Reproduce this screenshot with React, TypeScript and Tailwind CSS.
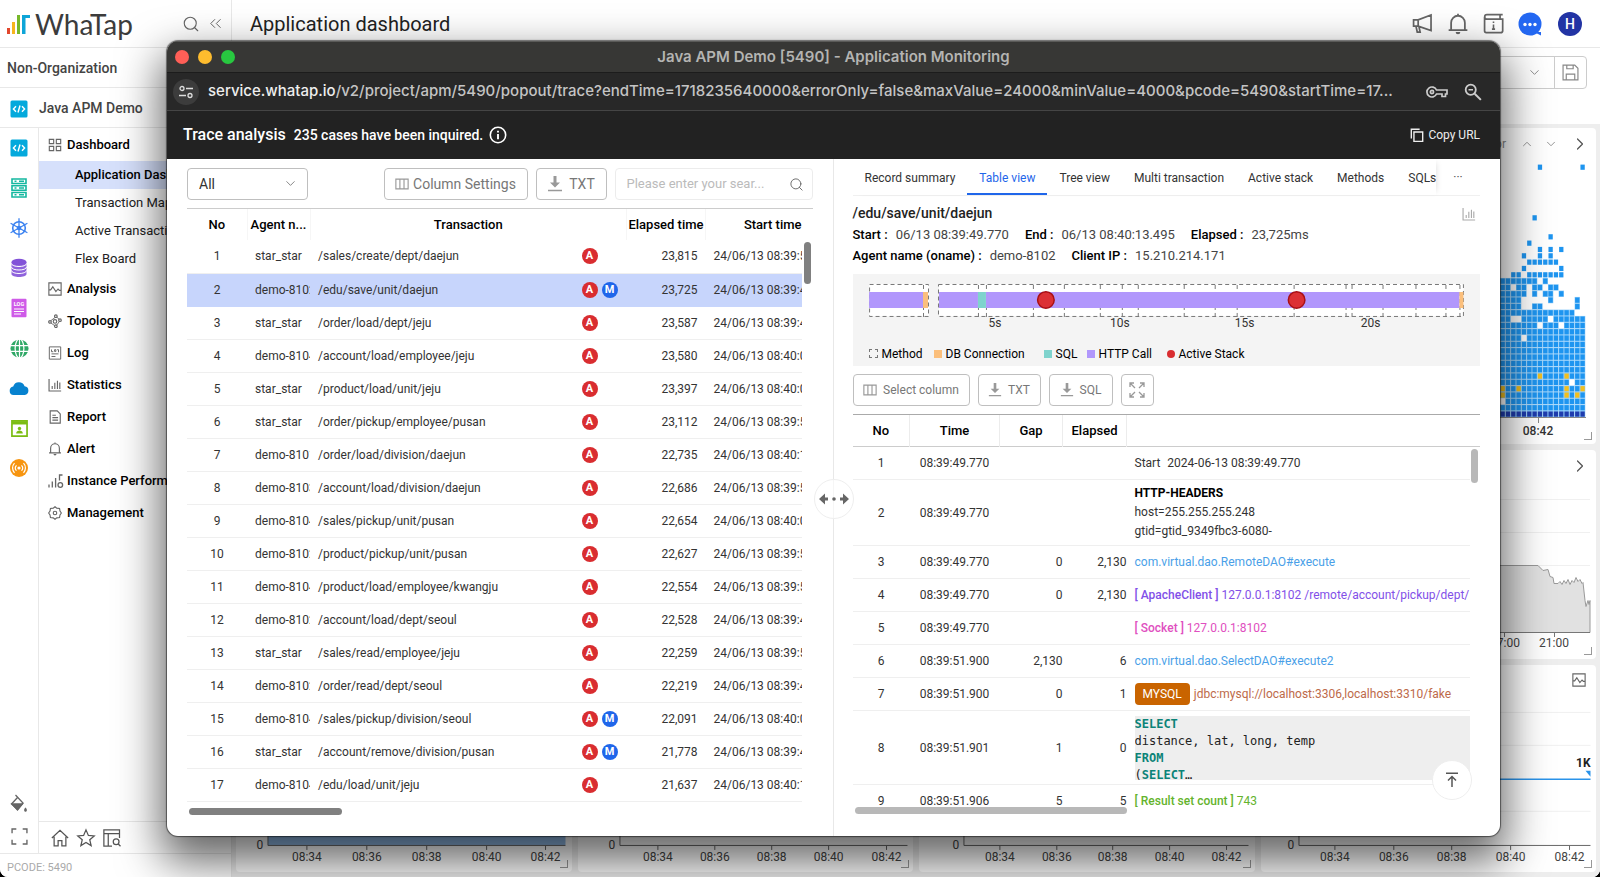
import type { ReactNode } from "react";
import clsx from "clsx";
import { ChevronDown, ChevronRight, ChevronUp, ChevronsLeft, Search } from "lucide-react";

type Trace = {
	agent: string;
	path: string;
	multi?: boolean;
	elapsed: string;
	start: string;
};

const traces: Trace[] = [
	{ agent: "star_star", path: "/sales/create/dept/daejun", elapsed: "23,815", start: "24/06/13 08:39:5" },
	{ agent: "demo-8102", path: "/edu/save/unit/daejun", multi: true, elapsed: "23,725", start: "24/06/13 08:39:4" },
	{ agent: "star_star", path: "/order/load/dept/jeju", elapsed: "23,587", start: "24/06/13 08:39:4" },
	{ agent: "demo-8104", path: "/account/load/employee/jeju", elapsed: "23,580", start: "24/06/13 08:40:0" },
	{ agent: "star_star", path: "/product/load/unit/jeju", elapsed: "23,397", start: "24/06/13 08:40:0" },
	{ agent: "star_star", path: "/order/pickup/employee/pusan", elapsed: "23,112", start: "24/06/13 08:39:5" },
	{ agent: "demo-8101", path: "/order/load/division/daejun", elapsed: "22,735", start: "24/06/13 08:40:1" },
	{ agent: "demo-8103", path: "/account/load/division/daejun", elapsed: "22,686", start: "24/06/13 08:39:5" },
	{ agent: "demo-8104", path: "/sales/pickup/unit/pusan", elapsed: "22,654", start: "24/06/13 08:40:0" },
	{ agent: "demo-8102", path: "/product/pickup/unit/pusan", elapsed: "22,627", start: "24/06/13 08:39:5" },
	{ agent: "demo-8104", path: "/product/load/employee/kwangju", elapsed: "22,554", start: "24/06/13 08:39:5" },
	{ agent: "demo-8102", path: "/account/load/dept/seoul", elapsed: "22,528", start: "24/06/13 08:39:4" },
	{ agent: "star_star", path: "/sales/read/employee/jeju", elapsed: "22,259", start: "24/06/13 08:39:5" },
	{ agent: "demo-8102", path: "/order/read/dept/seoul", elapsed: "22,219", start: "24/06/13 08:39:4" },
	{ agent: "demo-8104", path: "/sales/pickup/division/seoul", multi: true, elapsed: "22,091", start: "24/06/13 08:40:0" },
	{ agent: "star_star", path: "/account/remove/division/pusan", multi: true, elapsed: "21,778", start: "24/06/13 08:39:4" },
	{ agent: "demo-8104", path: "/edu/load/unit/jeju", elapsed: "21,637", start: "24/06/13 08:40:1" },
];

type Step = { time: string; gap?: string; elapsed?: string; height?: string; content: ReactNode };

const steps: Step[] = [
	{
		time: "08:39:49.770",
		content: (
			<>
				Start <span className="ml-1">2024-06-13 08:39:49.770</span>
			</>
		),
	},
	{
		time: "08:39:49.770",
		height: "h-[66px]",
		content: (
			<div className="leading-[19px]">
				<p className="font-bold text-black">HTTP-HEADERS</p>
				<p>host=255.255.255.248</p>
				<p>gtid=gtid_9349fbc3-6080-</p>
			</div>
		),
	},
	{
		time: "08:39:49.770",
		gap: "0",
		elapsed: "2,130",
		content: <span className="text-[#4a9fe8]">com.virtual.dao.RemoteDAO#execute</span>,
	},
	{
		time: "08:39:49.770",
		gap: "0",
		elapsed: "2,130",
		content: (
			<span className="text-[#8250e8]">
				<b className="font-medium">[ ApacheClient ]</b> 127.0.0.1:8102 /remote/account/pickup/dept/
			</span>
		),
	},
	{
		time: "08:39:49.770",
		content: (
			<span className="text-[#e04fc0]">
				<b className="font-medium">[ Socket ]</b> 127.0.0.1:8102
			</span>
		),
	},
	{
		time: "08:39:51.900",
		gap: "2,130",
		elapsed: "6",
		content: <span className="text-[#4a9fe8]">com.virtual.dao.SelectDAO#execute2</span>,
	},
	{
		time: "08:39:51.900",
		gap: "0",
		elapsed: "1",
		content: (
			<div className="flex items-center gap-1">
				<span className="rounded bg-[#c96400] px-2 leading-[22px] text-white">MYSQL</span>
				<span className="text-[#bd6a4a]">jdbc:mysql://localhost:3306,localhost:3310/fake</span>
			</div>
		),
	},
	{
		time: "08:39:51.901",
		gap: "1",
		elapsed: "0",
		height: "h-[74px]",
		content: (
			<pre className="h-16 overflow-hidden bg-[#eeeeee] font-[family-name:DejaVu_Sans_Mono,monospace] text-[12px] leading-[17px] text-[#222]">
				<b className="text-[#0b8378]">SELECT</b>
				{"\ndistance, lat, long, temp\n"}
				<b className="text-[#0b8378]">FROM</b>
				{"\n("}
				<b className="text-[#0b8378]">SELECT</b>…
			</pre>
		),
	},
	{
		time: "08:39:51.906",
		gap: "5",
		elapsed: "5",
		content: (
			<span className="text-[#64b32c]">
				<b className="font-medium">[ Result set count ]</b> 743
			</span>
		),
	},
];

/* ---------- icons ---------- */

type IconProps = { className?: string; children: ReactNode; size?: number };

function Line({ className, children, size = 14 }: IconProps) {
	return (
		<svg
			viewBox="0 0 16 16"
			width={size}
			height={size}
			className={clsx("shrink-0", className)}
			fill="none"
			stroke="currentColor"
			strokeWidth="1.3"
		>
			{children}
		</svg>
	);
}

function CodeIcon() {
	return (
		<svg viewBox="0 0 18 18" width="18" height="18" className="shrink-0">
			<rect x="0.5" y="0.5" width="17" height="17" rx="1.5" fill="#04a9dc" />
			<path d="M6 6.2 3.4 9 6 11.8M12 6.2 14.6 9 12 11.8M10 5.5 8 12.5" fill="none" stroke="#fff" strokeWidth="1.4" />
		</svg>
	);
}

function ColumnsIcon() {
	return (
		<Line>
			<path d="M1 2.5h14v11H1zM5.6 2.5v11M10.3 2.5v11" />
		</Line>
	);
}

function DownloadIcon({ size = 14 }: { size?: number }) {
	return (
		<svg viewBox="0 0 16 16" width={size} height={size} className="shrink-0" fill="currentColor">
			<path d="M6.5 0h3v6.5H13L8 11.5 3 6.5h3.5zM1 13.8h14v1.4H1z" />
		</svg>
	);
}

function BarsIcon({ size = 14, className }: { size?: number; className?: string }) {
	return (
		<Line size={size} className={className}>
			<path d="M1.2 1v13.8H15M4.8 12.5V9M7.8 12.5V5.5M10.8 12.5V3M13.5 12.5V5" />
		</Line>
	);
}

function Bell({ size = 14, className }: { size?: number; className?: string }) {
	return (
		<Line size={size} className={className}>
			<path d="M1.2 12.5h13.6M3 12.5V7a5 5 0 0 1 10 0v5.5M8 2V.6" />
			<path d="M6.3 13.8h3.4a1.7 1.7 0 0 1-3.4 0z" fill="currentColor" stroke="none" />
		</Line>
	);
}

const products: { name: string; icon: ReactNode }[] = [
	{ name: "Application", icon: <CodeIcon /> },
	{
		name: "Server",
		icon: (
			<svg viewBox="0 0 18 20" width="18" height="20" fill="none" stroke="#14b8a0" strokeWidth="1.6">
				<path d="M2 1h14v4.5H2zM2 7.8h14v4.5H2zM2 14.5h14V19H2z" />
				<path d="M4.5 3.2h2M9 3.2h5M4.5 10h2M9 10h5M4.5 16.8h2M9 16.8h5" strokeWidth="1.4" />
			</svg>
		),
	},
	{
		name: "Kubernetes",
		icon: (
			<svg viewBox="0 0 20 20" width="20" height="20" fill="none" stroke="#3b82f0" strokeWidth="1.6">
				<circle cx="10" cy="10" r="6.3" />
				<circle cx="10" cy="10" r="1.5" />
				<path d="M10 .3v19.4M1.6 5.2l16.8 9.6M1.6 14.8l16.8-9.6" strokeWidth="1.3" />
			</svg>
		),
	},
	{
		name: "Database",
		icon: (
			<svg viewBox="0 0 18 20" width="18" height="20">
				<path d="M1.5 4v12c0 4 15 4 15 0V4z" fill="#8f63dc" />
				<ellipse cx="9" cy="4" rx="7.5" ry="3.2" fill="#8252d8" />
				<path d="M1.5 5.5c0 4 15 4 15 0M1.5 9c0 4 15 4 15 0M1.5 12.5c0 4 15 4 15 0" fill="none" stroke="#fff" strokeWidth="1" />
			</svg>
		),
	},
	{
		name: "Log",
		icon: (
			<svg viewBox="0 0 16 20" width="16" height="20">
				<rect x="0.5" y="0.8" width="15" height="18.4" rx="1" fill="#cf5be8" />
				<text x="8" y="8.2" fontSize="5.5" fontWeight="700" fill="#fff" textAnchor="middle">LOG</text>
				<path d="M3 11h10M3 13.5h10M3 16h7" stroke="#fff" strokeWidth="1" />
			</svg>
		),
	},
	{
		name: "Browser",
		icon: (
			<svg viewBox="0 0 20 20" width="19" height="19">
				<circle cx="10" cy="10" r="9.5" fill="#2fa866" />
				<path d="M10 0v20M0 7h20M0 13h20" stroke="#fff" strokeWidth="1.3" />
				<ellipse cx="10" cy="10" rx="4.6" ry="10" fill="none" stroke="#fff" strokeWidth="1.3" />
			</svg>
		),
	},
	{
		name: "Cloud",
		icon: (
			<svg viewBox="0 0 20 14" width="20" height="14">
				<path d="M4.5 14a4.3 4.3 0 0 1-.3-8.5A6 6 0 0 1 15.6 5.3 4.4 4.4 0 0 1 15.7 14z" fill="#0782cf" />
			</svg>
		),
	},
	{
		name: "RUM",
		icon: (
			<svg viewBox="0 0 18 18" width="17" height="17" fill="none" stroke="#7bbd12" strokeWidth="1.8">
				<path d="M1 1h16v16H1z" />
				<path d="M1 3h16" strokeWidth="3.5" />
				<circle cx="9" cy="9" r="1.8" fill="#7bbd12" stroke="none" />
				<path d="M5.5 14.2c0-4 7-4 7 0z" fill="#7bbd12" stroke="none" />
			</svg>
		),
	},
	{
		name: "URL",
		icon: (
			<svg viewBox="0 0 18 18" width="18" height="18" fill="none" stroke="#fff" strokeWidth="1.2">
				<circle cx="9" cy="9" r="9" fill="#f79510" stroke="none" />
				<circle cx="9" cy="9" r="1.6" fill="#fff" stroke="none" />
				<path d="M6.5 6.3a4 4 0 0 0 0 5.4M11.5 6.3a4 4 0 0 1 0 5.4M4.5 4.2a7 7 0 0 0 0 9.6M13.5 4.2a7 7 0 0 1 0 9.6" />
			</svg>
		),
	},
];

const menu: { name: string; icon: ReactNode; children?: string[] }[] = [
	{
		name: "Dashboard",
		icon: <Line><path d="M1.5 1.5h5v5h-5zM9.5 1.5h5v5h-5zM1.5 9.5h5v5h-5zM9.5 9.5h5v5h-5z" /></Line>,
		children: ["Application Dashboard", "Transaction Map", "Active Transaction", "Flex Board"],
	},
	{
		name: "Analysis",
		icon: <Line><path d="M1 1h14v14H1zM1 9h2l2.5-3.5L9 11l2.5-3 1.5 1.5h2" /></Line>,
	},
	{
		name: "Topology",
		icon: (
			<Line>
				<circle cx="8" cy="8.5" r="2" />
				<circle cx="9" cy="2.5" r="1.5" />
				<circle cx="2.3" cy="9" r="1.5" />
				<circle cx="13.7" cy="7" r="1.5" />
				<circle cx="9" cy="14" r="1.5" />
				<path d="m10 3.6 2.7 2.4M3.3 10.2l4.4 3.2M8 4 3 7.8M13 8.5l-3 4.2" strokeWidth="1" />
			</Line>
		),
	},
	{
		name: "Log",
		icon: <Line><path d="M1.5 1h13v14h-13zM4 4v2.5h2M7.5 4.2H9v2H7.5zM10.5 4.2H12v3M4 9h8M4 12h4.5" strokeWidth="1.1" /></Line>,
	},
	{ name: "Statistics", icon: <BarsIcon /> },
	{
		name: "Report",
		icon: <Line><path d="M2.5 1h8L14 4.5V15H2.5zM5 6h4M5 8.7h6.5M5 11.5h6.5" /></Line>,
	},
	{ name: "Alert", icon: <Bell /> },
	{
		name: "Instance Performance",
		icon: <Line size={16} className="-mr-0.5"><path d="M1 14.5v-3M4.3 14.5v-6M7.6 14.5V5M14.5 2h-3v5.5" /><circle cx="12.3" cy="12" r="2.3" /></Line>,
	},
	{
		name: "Management",
		icon: <Line><path d="M8 .8 10 2.5l3.2.3.5 3L15.3 8l-1.6 2.3-.5 2.9-3.2.4L8 15.2l-2-1.6-3.200-.4-.5-2.900L.7 8l1.600-2.200.5-3L6 2.500z" /><circle cx="8" cy="8" r="2" /></Line>,
	},
];

/* ---------- dashboard behind the popup ---------- */

// b = blue, y = yellow, n = navy, one character per 5 second bucket
const heatRows = [
	".......b.......b", "................", "................", "................",
	"................", "................", "................", "................",
	"......b.........", "................", "................", ".........b......",
	".....b..........", ".......b.b.b....", "....b..b.b......", ".....bbbbbb.....",
	"....b......b....", "..bb.bbbbbbb....", "bbbbbbb.b.......", "bb.bb.bb.bb.....",
	"bbbbb.b.bb.b....", "bbbb.....b....b.", "bbbb..bb......b.", "bbbbbbbbbbbbbb..",
	"bb..bbbbb.bbbbbb", "bbbbbbb.bbb.bbbb", "bbbbbbbbbbbbbbbb", "bbbb.bbbbbbbbbbb",
	"bbbbbbbbbbbbbbbb", "bbbbbbbbbbbbbbbb", "bbbbbbbbbbbbbbbb", "bbbbbbbbbbbbbbbb",
	"bbbbbbbbbbbbbbbb", "bbbbbbbybbbbybbb", "bbbbbbbbbbbbb.bb", "ybbybbbbbbbbybby",
	"ybbbbbbbbbbbybyb", ".bbbbbbbbbbbbbbb", "bbbbbbbbbbbbbbbb", "nnnnnnnnnnnnnnnn",
];

const heatFill: Record<string, string> = { b: "#1e95f0", y: "#f3bf1e", n: "#1f3cae" };

function HeatMap() {
	return (
		<svg viewBox="0 0 96 276" width="96" height="276">
			{heatRows.map((row, y) =>
				row.split("").map((cell, x) =>
					cell === "." ? null : (
						<g key={`${x}-${y}`}>
							{y > 17 && <rect x={x * 5.33} y={y * 6.33} width="5.33" height="6.33" fill="#90cdfa" />}
							<rect x={x * 5.33 + 0.5} y={y * 6.33 + 0.6} width="4.3" height="5.2" fill={heatFill[cell]} />
						</g>
					),
				),
			)}
			<path d="M0 253.5h86M38.5 254v5" stroke="#888" fill="none" />
			<text x="38" y="271" fontSize="12" fontWeight="500" textAnchor="middle" fill="#333">08:42</text>
		</svg>
	);
}

function CornerMark() {
	return <span className="absolute right-1 bottom-1 size-2 border-r border-b border-[#999]" />;
}

function Card({ className, children }: { className?: string; children?: ReactNode }) {
	return <section className={clsx("relative min-h-0 min-w-0 overflow-hidden rounded bg-white", className)}>{children}</section>;
}

function TimeChart({ axis, labels, end, filled }: { axis: number; labels: number[]; end: number; filled?: boolean }) {
	const times = ["08:34", "08:36", "08:38", "08:40", "08:42"];

	return (
		<svg viewBox="0 0 336 60" className="absolute bottom-0 left-0 w-full" fill="none" stroke="#666">
			{filled && <rect x={axis} y="0" width={end - axis} height="33" fill="#8fb9e6" stroke="none" />}
			<path d={`M${axis} 0V33.5H${end}`} />
			<text x={axis - 8} y="37" fontSize="12" textAnchor="middle" fill="#444" stroke="none">0</text>
			{labels.map((x, i) => (
				<g key={x}>
					<path d={`M${x} 34v4`} />
					<text x={x} y="49" fontSize="12" textAnchor="middle" fill="#444" stroke="none">{times[i]}</text>
				</g>
			))}
		</svg>
	);
}

function Sidebar() {
	return (
		<aside className="flex w-[232px] shrink-0 flex-col border-r border-[#e8e8e8] bg-white">
			<div className="flex h-12 items-center border-b border-[#e8e8e8] pr-1.5 pl-1.5">
				<svg viewBox="0 0 26 22" width="26" height="22" className="shrink-0">
					<path d="M1 15h3v6H1z" fill="#e2472d" />
					<path d="M6 9h3v12H6z" fill="#f6b51e" />
					<path d="M11 2h3v19h-3z" fill="#77b82a" />
					<path d="M16 2h8v3h-4.5v16H16z" fill="#0ea5d8" />
				</svg>
				<span className="pl-[3px] font-[family-name:Lato,sans-serif] text-[28px] leading-8 text-[#3c3c3c]">WhaTap</span>
				<div className="ml-auto flex items-center gap-1.5 text-[#666]">
					<button aria-label="Search menu"><Search size={18} strokeWidth={1.5} /></button>
					<button aria-label="Collapse menu"><ChevronsLeft size={19} strokeWidth={1.25} /></button>
				</div>
			</div>
			<div className="flex h-10 items-center border-b border-[#e8e8e8] pt-0.5 pl-[7px] text-[14px] font-medium text-[#444]">Non-Organization</div>
			<div className="flex h-10 items-center gap-[11px] border-b border-[#e8e8e8] pt-0.5 pl-2.5 text-[14px] font-medium text-[#444]">
				<CodeIcon />
				Java APM Demo
			</div>

			<div className="flex min-h-0 flex-1">
				<div className="flex w-[39px] flex-col items-center border-r border-[#e8e8e8]">
					{products.map((p) => (
						<a key={p.name} href="#" aria-label={p.name} className="flex h-10 items-center">
							{p.icon}
						</a>
					))}
					<div className="mt-auto flex flex-col items-center gap-3.5 pb-2 text-[#666]">
						<button aria-label="Theme">
							<svg viewBox="0 0 18 20" width="18" height="20" fill="none" stroke="currentColor" strokeWidth="1.3">
								<path d="m5.5 1 7.5 8-5.5 6.5L1.5 10l6-6.5" />
								<path d="M2 10h10.5l-5 6z" fill="currentColor" />
								<path d="M15.5 14.5c2.5 3.5-2.5 3.5 0 0z" fill="currentColor" />
							</svg>
						</button>
						<button aria-label="Full screen">
							<Line size={17}><path d="M1 5V1h4M11 1h4v4M15 11v4h-4M5 15H1v-4" /></Line>
						</button>
					</div>
				</div>
				<div className="flex min-w-0 flex-1 flex-col">
					<nav className="flex-1 pt-px text-[13px] text-[#222]">
						{menu.map((item) => (
							<div key={item.name}>
								<a href="#" className="flex h-8 items-center gap-[5px] pl-[9px] font-medium whitespace-nowrap text-black">
									<span className="text-[#666]">{item.icon}</span>
									{item.name}
								</a>
								{item.children?.map((child, i) => (
									<a
										key={child}
										href="#"
										className={clsx(
											"block h-7 truncate pl-9 leading-7",
											i === 0 && "bg-[#d6e0fb] font-medium text-black",
										)}
									>
										{child}
									</a>
								))}
							</div>
						))}
					</nav>
					<div className="flex h-8 items-center gap-1.5 border-t border-[#e8e8e8] pl-[11px] text-[#555]">
						<button aria-label="Home">
							<Line size={20}><path d="M1.5 8 8 1.8 14.5 8M3.3 7v7.3h3.2V10h3v4.3h3.2V7" strokeWidth="1" /></Line>
						</button>
						<button aria-label="Favorites">
							<Line size={20}><path d="m8 1.5 1.9 4.4 4.7.4L11 9.400l1.100 4.700L8 11.600l-4.100 2.500L5 9.400 1.400 6.300l4.700-.4z" strokeWidth="1" /></Line>
						</button>
						<button aria-label="Search layout">
							<Line size={20}><path d="M14 8V1.5H1.5v13H8M1.5 4.5H14M5 4.5v10M13 12.8l1.8 1.8" strokeWidth="1" /><circle cx="11.3" cy="11" r="2.3" strokeWidth="1" /></Line>
						</button>
					</div>
				</div>
			</div>
			<div className="flex h-6 items-center border-t border-[#e8e8e8] pt-1.5 pl-[7px] text-[11px] text-[#aaa]">PCODE: 5490</div>
		</aside>
	);
}

function Dashboard() {
	return (
		<main className="flex min-w-0 flex-1 flex-col bg-white">
			<header className="flex h-12 shrink-0 items-center border-b border-[#e8e8e8] pr-[18px] pl-[18px]">
				<h1 className="text-[20px] text-[#222]">Application dashboard</h1>
				<div className="ml-auto flex items-center gap-3.5 text-[#666]">
					<button aria-label="Notices">
						<Line size={21}><path d="M1.2 5.2h3.5l9.800-3.700v11.800L4.700 10H1.200zM4.700 5.200V10M3 10l1 4.500h2.200L5.300 10.300" /></Line>
					</button>
					<button aria-label="Alerts"><Bell size={22} /></button>
					<button aria-label="Guide">
						<Line size={21}>
							<path d="M15 1.3H3a1.700 1.700 0 0 0 0 3.400h12v8.800q0 1.500-1.500 1.500h-11Q1.200 15 1.200 13.500V3M13 1.300v3.200" />
							<path d="M8 8.7v3.8M8 6.5v1.2M6.8 12.300h2.400" strokeWidth="1.2" />
						</Line>
					</button>
					<button aria-label="Chat">
						<svg viewBox="0 0 24 24" width="24" height="24">
							<circle cx="12" cy="12" r="11.5" fill="#2468f2" />
							<path d="M16 20h7v3.5z" fill="#2468f2" />
							<circle cx="7" cy="12.5" r="1.7" fill="#fff" />
							<circle cx="12" cy="12.5" r="1.7" fill="#fff" />
							<circle cx="17" cy="12.5" r="1.7" fill="#fff" />
						</svg>
					</button>
					<button className="ml-0.5 size-6 rounded-full bg-[#2234a4] text-[14px] leading-6 font-medium text-white">H</button>
				</div>
			</header>
			<div className="flex h-[76px] shrink-0 justify-end pt-2 pr-[13px]">
				<div className="flex h-[33px] w-[180px] items-center justify-end rounded border border-[#ccc] text-[#888]">
					<button aria-label="Choose preset" className="px-3"><ChevronDown size={15} strokeWidth={1.5} /></button>
					<button aria-label="Save preset" className="flex h-full items-center border-l border-[#ccc] px-[7px]">
						<Line size={17}><path d="M1 1h11l3 3v11H1zM4.5 1v3.5h6V1M4 15V9.5h8V15" strokeWidth="1.1" /></Line>
					</button>
				</div>
			</div>

			<div className="flex min-h-0 flex-1 flex-col gap-1.5 bg-[#eeeeee] px-1 pt-1 pb-[5px]">
				<Card className="flex basis-0 grow-[316] flex-col items-end">
					<div className="flex h-9 items-center gap-2 pr-1.5 pb-1 text-[12px] text-[#888]">
						<span>Error</span>
						<ChevronUp size={14} strokeWidth={1.5} className="ml-1.5" />
						<ChevronDown size={14} strokeWidth={1.5} className="ml-0.5" />
						<ChevronRight size={20} strokeWidth={1.5} className="ml-1 text-[#555]" />
					</div>
					<HeatMap />
					<CornerMark />
				</Card>
				<Card className="flex basis-0 grow-[210] flex-col items-end">
					<button aria-label="Open widget" className="mt-1.5 mr-1.5 text-[#555]"><ChevronRight size={20} strokeWidth={1.5} /></button>
					<svg viewBox="0 0 120 180" width="120" height="180" className="shrink-0">
						<path d="M0 23.5h114M0 56.5h114M0 89.5h114" stroke="#f0f0f0" />
						<path
							d="M0 89.5h62l5 5 5-1 2 7 3 1 1 6 4 0 2-2 2 3 2-4 2 3 2-4 2 5 2-4 2 2 2-5 2 4 2-2 2 4 1-1 2 18 1 6 2-6 1 4 1-4 0 32H0z"
							fill="#e1e1e1"
							stroke="#999"
						/>
						<path d="M0 156.5h114M28.5 157v4M78.5 157v4" stroke="#777" />
						<text x="29" y="171" fontSize="12" textAnchor="middle" fill="#444">17:00</text>
						<text x="78" y="171" fontSize="12" textAnchor="middle" fill="#444">21:00</text>
					</svg>
					<CornerMark />
				</Card>
				<div className="grid min-h-0 basis-0 grow-[207] grid-cols-4 gap-1.5">
					<Card>
						<TimeChart axis={32} labels={[71, 131, 191, 251, 310]} end={330} filled />
						<CornerMark />
					</Card>
					<Card>
						<TimeChart axis={42} labels={[80, 137, 194, 251, 309]} end={330} />
						<CornerMark />
					</Card>
					<Card>
						<TimeChart axis={45} labels={[81, 138, 194, 251, 308]} end={330} />
						<CornerMark />
					</Card>
					<Card>
						<button aria-label="Analysis" className="absolute top-2 right-2.5 text-[#666]">
							<Line size={14}><path d="M1 1h14v14H1zM1 9h2l2.5-3.5L9 11l2.5-3 1.5 1.5h2" /></Line>
						</button>
						<svg viewBox="0 0 336 147" className="absolute bottom-[60px] left-0 w-full" fill="none">
							<path d="M38 47.5h292M38 80.5h292" stroke="#f0f0f0" />
							<path d="M38 114.5h292" stroke="#2a93ea" strokeWidth="1.5" />
							<path d="M325 106h5v6z" fill="#2a93ea" />
							<text x="330" y="102" fontSize="12" fontWeight="700" textAnchor="end" fill="#222">1K</text>
							<path d="M38 146.5h292" stroke="#f0f0f0" />
						</svg>
						<TimeChart axis={38} labels={[74, 133, 191, 250, 309]} end={330} />
						<CornerMark />
					</Card>
				</div>
			</div>
		</main>
	);
}

/* ---------- popup ---------- */

function OutlineButton({ label, icon, className }: { label?: string; icon: ReactNode; className?: string }) {
	return (
		<button
			aria-label={label ?? "Expand all"}
			className={clsx(
				"flex h-8 shrink-0 items-center justify-center rounded border border-[#bfbfbf] whitespace-nowrap text-[#777]",
				className,
			)}
		>
			<span className="text-[#999]">{icon}</span>
			{label}
		</button>
	);
}

function TraceList() {
	return (
		<section className="flex min-w-0 flex-col border-r border-[#e8e8e8] px-5 pt-[9px]">
			<div className="flex items-center gap-2">
				<div className="relative mr-auto">
					<select aria-label="Filter" className="h-8 w-[121px] appearance-none rounded border border-[#bfbfbf] bg-white pl-[11px] text-[14px] text-[#333]">
						<option>All</option>
					</select>
					<ChevronDown size={15} strokeWidth={1.25} className="pointer-events-none absolute top-2 right-2.5 text-[#666]" />
				</div>
				<OutlineButton label="Column Settings" icon={<ColumnsIcon />} className="w-36 gap-1 text-[14px]" />
				<OutlineButton label="TXT" icon={<DownloadIcon size={16} />} className="w-[71px] gap-1.5 text-[14px]" />
				<label className="flex h-8 w-[198px] items-center rounded border border-[#ececec] pr-2 pl-[11px]">
					<input
						aria-label="Search"
						placeholder="Please enter your sear..."
						className="w-full min-w-0 text-[13px] outline-none placeholder:text-[#bbb]"
					/>
					<Search size={15} strokeWidth={1.5} className="shrink-0 text-[#666]" />
				</label>
			</div>

			<div className="relative mt-2 border-t border-[#ccc] pr-[11px]">
				<table className="w-full table-fixed border-collapse text-[12px] whitespace-nowrap text-[#333]">
					<colgroup>
						<col className="w-[60px]" />
						<col className="w-[63px]" />
						<col />
						<col className="w-[79px]" />
						<col className="w-24" />
					</colgroup>
					<thead>
						<tr className="h-[31px] text-[13px] text-black [&>th]:font-medium">
							<th>No</th>
							<th className="border-x border-[#f6f6f6]">Agent n...</th>
							<th>Transaction</th>
							<th className="border-x border-[#f6f6f6]">Elapsed time</th>
							<th className="text-right">Start time</th>
						</tr>
					</thead>
					<tbody>
						{traces.map((t, i) => (
							<tr key={i} className={clsx("h-[33px] border-b", i === 1 ? "border-[#c7d5fc] bg-[#c7d5fc]" : "border-[#efefef]")}>
								<td className="text-center">{i + 1}</td>
								<td className="overflow-hidden pl-2">{t.agent}</td>
								<td className="pr-[9px] pl-2">
									<div className="flex items-center">
										<span className="flex-1">{t.path}</span>
										<span className="flex w-9 gap-1 text-center text-[11px] leading-4 font-bold text-white">
											<span className="size-4 rounded-full bg-[#d92d30]">A</span>
											{t.multi && <span className="size-4 rounded-full bg-[#1f66ea]">M</span>}
										</span>
									</div>
								</td>
								<td className="pr-2 text-right">{t.elapsed}</td>
								<td className="overflow-hidden pl-2">{t.start}</td>
							</tr>
						))}
					</tbody>
				</table>
				<span className="absolute top-[33px] right-0.5 h-[42px] w-[7px] rounded-sm bg-[#808080]" />
			</div>
			<div className="mt-1.5 ml-0.5 h-[7px] w-[153px] rounded-sm bg-[#808080]" />
		</section>
	);
}

const tabs = ["Record summary", "Table view", "Tree view", "Multi transaction", "Active stack", "Methods", "SQLs"];
const methodLines = [54, 109, 117, 164, 195, 231, 253, 269, 315, 346, 368, 425, 477, 483, 514, 547, 577, 591];

function Timeline() {
	return (
		<div className="mt-2 bg-[#f4f4f4] px-4 pt-[9px] pb-0.5">
			<svg viewBox="0 0 596 58" className="w-full" fill="none">
				<path d="M0 1h60v32H0zM70 1h525v32H70z" fill="#fff" />
				<g stroke="#777" strokeDasharray="4 3">
					<path d="M.5 1.5h59v32H.5zM69.5 1.5H595v32H69.5z" />
					{methodLines.map((x) => (
						<path key={x} d={`M${x}.5 2v32`} />
					))}
				</g>
				<path d="M0 9h54v16H0zM70 9h39v16H70zM117 9h474v16H117z" fill="#b197fc" />
				<path d="M54 9h5v16h-5zM591 9h4v16h-4z" fill="#fbbf7c" />
				<path d="M109 9h8v16h-8z" fill="#7fd3cd" />
				<circle cx="177" cy="17" r="8.3" fill="#dc3034" stroke="#a81014" strokeWidth="1.5" />
				<circle cx="428" cy="17" r="8.3" fill="#dc3034" stroke="#a81014" strokeWidth="1.5" />
				<g fontSize="12" fill="#333" textAnchor="middle">
					<text x="126" y="44">5s</text>
					<text x="251" y="44">10s</text>
					<text x="376" y="44">15s</text>
					<text x="502" y="44">20s</text>
				</g>
			</svg>
			<div className="mt-[3px] flex h-5 items-center text-[12px] text-black">
				<span className="mr-1 size-[9px] border border-dashed border-[#777]" />
				<span className="w-[52px]">Method</span>
				<span className="mr-1 size-2 bg-[#fbbf7c]" />
				<span className="w-[98px]">DB Connection</span>
				<span className="mr-1 size-2 bg-[#7fd3cd]" />
				<span className="w-[31px]">SQL</span>
				<span className="mr-1 size-2 bg-[#b197fc]" />
				<span className="w-[68px]">HTTP Call</span>
				<span className="mr-1 size-2 rounded-full bg-[#d92d30]" />
				<span>Active Stack</span>
			</div>
		</div>
	);
}

function Field({ label, children }: { label: string; children: ReactNode }) {
	return (
		<div className="flex gap-2">
			<dt className="font-medium text-black">{label} :</dt>
			<dd>{children}</dd>
		</div>
	);
}

function TraceDetail() {
	return (
		<section className="flex min-w-0 flex-col pr-5 pl-[19px]">
			<div className="flex h-[37px] border-b border-[#f0f0f0] text-[12px] text-[#333]">
				<div role="tablist" className="flex min-w-0 flex-1 overflow-hidden shadow-[4px_0_6px_-4px_rgba(0,0,0,0.15)]">
					{tabs.map((tab) => (
						<button
							key={tab}
							role="tab"
							aria-selected={tab === "Table view"}
							className={clsx(
								"shrink-0 border-b-2 px-3 pt-1 whitespace-nowrap",
								tab === "Table view" ? "border-[#1f66ea] text-[#1f66ea]" : "border-transparent",
							)}
						>
							{tab}
						</button>
					))}
				</div>
				<button aria-label="More tabs" className="w-11 shrink-0 text-[#555]">···</button>
			</div>

			<div className="mt-[7px] flex items-center justify-between">
				<h2 className="text-[14px] leading-[21px] font-medium text-[#222]">/edu/save/unit/daejun</h2>
				<BarsIcon className="mr-1 text-[#aaa]" />
			</div>
			<dl className="flex gap-4 text-[13px] leading-[21px] text-[#444]">
				<Field label="Start">06/13 08:39:49.770</Field>
				<Field label="End">06/13 08:40:13.495</Field>
				<Field label="Elapsed">23,725ms</Field>
			</dl>
			<dl className="flex gap-4 text-[13px] leading-[21px] text-[#444]">
				<Field label="Agent name (oname)">demo-8102</Field>
				<Field label="Client IP">15.210.214.171</Field>
			</dl>

			<Timeline />

			<div className="mt-2 flex gap-2 text-[12px]">
				<OutlineButton label="Select column" icon={<ColumnsIcon />} className="w-[117px] gap-1.5" />
				<OutlineButton label="TXT" icon={<DownloadIcon />} className="w-[63px] gap-1.5" />
				<OutlineButton label="SQL" icon={<DownloadIcon />} className="w-16 gap-1.5" />
				<OutlineButton
					icon={
						<Line size={16}>
							<path d="M1 5V1h4M1 1l5 5M11 1h4v4M15 1l-5 5M15 11v4h-4M15 15l-5-5M5 15H1v-4M1 15l5-5" />
						</Line>
					}
					className="w-[33px]"
				/>
			</div>

			<div className="relative mt-2 h-[393px] overflow-hidden border-t border-[#aaa]">
				<table className="w-full table-fixed border-collapse text-[12px] whitespace-nowrap text-[#333]">
					<colgroup>
						<col className="w-[57px]" />
						<col className="w-[90px]" />
						<col className="w-[63px]" />
						<col className="w-16" />
						<col />
						<col className="w-2.5" />
					</colgroup>
					<thead>
						<tr className="h-8 border-b border-[#ccc] text-[13px] text-black [&>th]:font-medium">
							<th>No</th>
							<th className="border-x border-[#ececec]">Time</th>
							<th>Gap</th>
							<th className="border-x border-[#ececec]">Elapsed</th>
							<th aria-label="Content" />
							<th aria-label="Scroll" />
						</tr>
					</thead>
					<tbody>
						{steps.map((s, i) => (
							<tr key={i} className={s.height ?? "h-[33px]"}>
								<td className="border-b border-[#efefef] text-center">{i + 1}</td>
								<td className="border-b border-[#efefef] text-center">{s.time}</td>
								<td className="border-b border-[#efefef] text-right">{s.gap}</td>
								<td className="border-b border-[#efefef] text-right">{s.elapsed}</td>
								<td className="overflow-hidden border-b border-[#efefef] pl-2">{s.content}</td>
								<td />
							</tr>
						))}
					</tbody>
				</table>
				<span className="absolute top-[34px] right-0.5 h-[34px] w-[7px] rounded-sm bg-[#b8b8b8]" />
			</div>
			<div className="ml-0.5 h-[7px] w-[272px] rounded-sm bg-[#b8b8b8]" />
		</section>
	);
}

function Popup() {
	return (
		<div className="absolute top-[41px] right-[100px] bottom-[41px] left-[167px] flex flex-col overflow-hidden rounded-[11px] bg-white shadow-[0_0_1px_1px_rgba(0,0,0,0.5),0_20px_44px_6px_rgba(0,0,0,0.6)]">
			<div className="relative flex h-[31px] shrink-0 items-center justify-center border-t border-[#5a5a58] bg-[#373735] font-[family-name:Inter,sans-serif]">
				<div className="absolute left-2 flex gap-[9px]">
					<button aria-label="Close" className="size-[14px] rounded-full bg-[#ff5f57]" />
					<button aria-label="Minimize" className="size-[14px] rounded-full bg-[#febc2e]" />
					<button aria-label="Zoom" className="size-[14px] rounded-full bg-[#28c840]" />
				</div>
				<p className="text-[15px] font-semibold text-[#b4b4b2]">Java APM Demo [5490] - Application Monitoring</p>
			</div>
			<div className="flex h-[39px] shrink-0 items-center border-y border-t-[#1c1c1c] border-b-[#454545] bg-[#282828] pr-[18px] pl-1.5 font-[family-name:Inter,sans-serif]">
				<button aria-label="Site information" className="flex size-[26px] shrink-0 items-center justify-center rounded-full bg-[#3c3c3c] text-[#ddd]">
					<Line size={16}>
						<circle cx="4" cy="4.5" r="2" />
						<circle cx="12" cy="11.5" r="2" />
						<path d="M8 4.5h7M1 11.5h7" strokeWidth="1.6" />
					</Line>
				</button>
				<p className="min-w-0 flex-1 overflow-hidden pl-[9px] text-[15px] font-medium whitespace-nowrap text-[#c4c4c4]">
					<span className="text-[#eee]">service.whatap.io</span>
					/v2/project/apm/5490/popout/trace?endTime=1718235640000&errorOnly=false&maxValue=24000&minValue=4000&pcode=5490&startTime=17...
				</p>
				<div className="flex items-center gap-4 text-[#ccc]">
					<button aria-label="Passwords">
						<svg viewBox="0 0 22 12" width="22" height="12" fill="none" stroke="currentColor" strokeWidth="1.7">
							<path d="M10.5 4H21v4h-1.5v2.500h-3.500V8h-5.500A5 5 0 1 1 10.500 4z" />
							<circle cx="6" cy="6" r="1.6" />
						</svg>
					</button>
					<button aria-label="Zoom level">
						<Line size={18}><circle cx="6" cy="6" r="4.5" strokeWidth="1.6" /><path d="m9.5 9.5 5.5 5.5" strokeWidth="1.8" /><path d="M4 6h4" /></Line>
					</button>
				</div>
			</div>
			<header className="flex h-12 shrink-0 items-center bg-[#222] pr-5 pl-4 text-white">
				<h1 className="text-[16px] font-medium">Trace analysis</h1>
				<p className="pl-2 text-[14px] font-medium">235 cases have been inquired.</p>
				<svg viewBox="0 0 18 18" width="18" height="18" className="ml-1.5" fill="none" stroke="#fff" strokeWidth="1.6">
					<circle cx="9" cy="9" r="7.7" />
					<path d="M9 8v5.2M9 4.7v1.7" strokeWidth="1.9" />
				</svg>
				<button className="ml-auto flex items-center gap-1 text-[12px] text-[#eee]">
					<Line size={14}><path d="M1.5 12V1.5H11M4.5 4.5h10v11h-10z" strokeWidth="1.6" /></Line>
					Copy URL
				</button>
			</header>

			<div className="relative grid min-h-0 flex-1 grid-cols-2">
				<TraceList />
				<TraceDetail />
				<button
					aria-label="Resize panels"
					className="absolute top-[320px] left-1/2 flex size-10 -translate-x-1/2 items-center justify-center rounded-full border border-[#eee] bg-white/60 text-[#666]"
				>
					<svg viewBox="0 0 30 12" width="30" height="12" fill="currentColor">
						<path d="M0 6 6 .5v4h3v3H6v4zM30 6 24 .5v4h-3v3h3v4z" />
						<circle cx="15" cy="6" r="1.8" />
					</svg>
				</button>
				<button
					aria-label="Scroll to top"
					className="absolute right-[28px] bottom-9 flex size-10 items-center justify-center rounded-full border border-[#eee] bg-white text-[#555]"
				>
					<Line size={16}><path d="M2 1.2h12M8 15V4.500M4 8.500l4-4 4 4" strokeWidth="1.5" /></Line>
				</button>
			</div>
		</div>
	);
}

export default function App() {
	return (
		<div className="h-screen bg-black font-[family-name:Roboto,sans-serif]">
			<div className="relative flex h-full overflow-hidden rounded-b-lg bg-white">
				<Sidebar />
				<Dashboard />
				<Popup />
			</div>
		</div>
	);
}
